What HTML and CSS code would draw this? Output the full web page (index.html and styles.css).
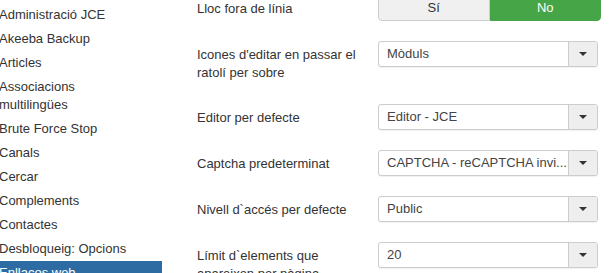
FILE: index.html
```html
<!DOCTYPE html>
<html lang="ca">
<head>
  <meta charset="UTF-8">
  <title>Configuració global</title>
  <link rel="stylesheet" href="styles.css">
</head>
<body>

<div class="page">
  <!-- Component list -->
  <ul class="nav-list">
    <li><a href="#">Administració JCE</a></li>
    <li><a href="#">Akeeba Backup</a></li>
    <li><a href="#">Articles</a></li>
    <li><a href="#">Associacions multilingües</a></li>
    <li><a href="#">Brute Force Stop</a></li>
    <li><a href="#">Canals</a></li>
    <li><a href="#">Cercar</a></li>
    <li><a href="#">Complements</a></li>
    <li><a href="#">Contactes</a></li>
    <li><a href="#">Desbloqueig: Opcions</a></li>
    <li class="active"><a href="#">Enllaços web</a></li>
  </ul>

  <!-- Settings form -->
  <div class="form">
    <div class="control-group">
      <div class="control-label">Lloc fora de línia</div>
      <div class="controls">
        <div class="btn-group">
          <span class="btn">Sí</span>
          <span class="btn btn-success">No</span>
        </div>
      </div>
    </div>

    <div class="control-group">
      <div class="control-label">Icones d'editar en passar el ratolí per sobre</div>
      <div class="controls">
        <div class="chzn"><span class="chzn-text">Mòduls</span><span class="chzn-arrow"><b></b></span></div>
      </div>
    </div>

    <div class="control-group">
      <div class="control-label">Editor per defecte</div>
      <div class="controls">
        <div class="chzn"><span class="chzn-text">Editor - JCE</span><span class="chzn-arrow"><b></b></span></div>
      </div>
    </div>

    <div class="control-group">
      <div class="control-label">Captcha predeterminat</div>
      <div class="controls">
        <div class="chzn"><span class="chzn-text">CAPTCHA - reCAPTCHA invi...</span><span class="chzn-arrow"><b></b></span></div>
      </div>
    </div>

    <div class="control-group">
      <div class="control-label">Nivell d`accés per defecte</div>
      <div class="controls">
        <div class="chzn"><span class="chzn-text">Public</span><span class="chzn-arrow"><b></b></span></div>
      </div>
    </div>

    <div class="control-group">
      <div class="control-label">Límit d`elements que apareixen per pàgina</div>
      <div class="controls">
        <div class="chzn"><span class="chzn-text">20</span><span class="chzn-arrow"><b></b></span></div>
      </div>
    </div>
  </div>
</div>

</body>
</html>
```

FILE: styles.css
```css
body {
  font-family: "Liberation Sans", Arial, sans-serif;
  font-size: 13px;
  line-height: 18px;
  color: #333;
  background-color: #fff;
  margin: 0;
  padding: 0;
  overflow: hidden;
}

.page {
  display: flex;
  align-items: flex-start;
}

/* Sidebar */
.nav-list {
  list-style: none;
  margin: 3px 0 0 -16px;
  padding: 0;
  width: 178px;
  flex-shrink: 0;
}

.nav-list a {
  display: block;
  padding: 3px 15px;
  color: #333;
  text-decoration: none;
}

.nav-list .active a {
  background-color: #2d6ca2;
  color: #fff;
}

/* Form */
.form {
  margin: -5px 0 0 35px;
}

.control-group {
  display: flex;
  align-items: flex-start;
  margin-bottom: 20px;
}

.control-label {
  width: 160px;
  padding: 5px 0 2px;
  margin-right: 21px;
}

.btn-group {
  display: flex;
  width: 223px;
}

.btn {
  flex: 1;
  text-align: center;
  padding: 3px 12px;
  border: 1px solid #ccc;
  background-color: #f0f0f0;
  color: #333;
  border-radius: 4px 0 0 4px;
}

.btn-success {
  background-color: #46a546;
  border-color: #46a546;
  color: #fff;
  border-radius: 0 4px 4px 0;
}

.chzn {
  display: flex;
  width: 220px;
  height: 26px;
  box-sizing: border-box;
  border: 1px solid #ccc;
  border-radius: 3px;
  background-color: #fff;
  color: #444;
  box-shadow: 0 1px 1px rgba(0, 0, 0, 0.06);
}

.chzn-text {
  flex: 1;
  padding: 4px 8px;
  line-height: 16px;
  white-space: nowrap;
  overflow: hidden;
}

.chzn-arrow {
  width: 28px;
  flex-shrink: 0;
  border-left: 1px solid #ccc;
  background-color: #eee;
  border-radius: 0 3px 3px 0;
  display: flex;
  align-items: center;
  justify-content: center;
}

.chzn-arrow b {
  width: 0;
  height: 0;
  border-left: 4px solid transparent;
  border-right: 4px solid transparent;
  border-top: 4px solid #333;
}
```
